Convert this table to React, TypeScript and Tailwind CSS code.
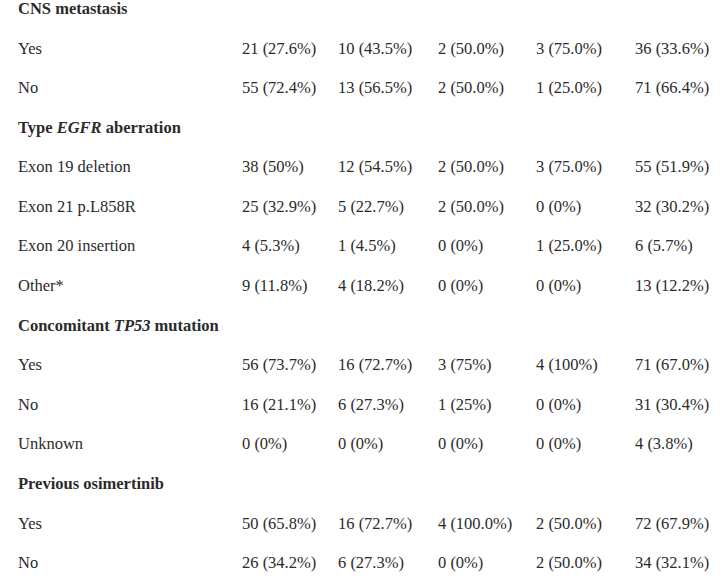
import React from "react";

type Row =
  | { kind: "head"; label: React.ReactNode }
  | { kind: "data"; label: string; values: string[] };

const rows: Row[] = [
  { kind: "head", label: "CNS metastasis" },
  { kind: "data", label: "Yes", values: ["21 (27.6%)", "10 (43.5%)", "2 (50.0%)", "3 (75.0%)", "36 (33.6%)"] },
  { kind: "data", label: "No", values: ["55 (72.4%)", "13 (56.5%)", "2 (50.0%)", "1 (25.0%)", "71 (66.4%)"] },
  { kind: "head", label: <>Type <i>EGFR</i> aberration</> },
  { kind: "data", label: "Exon 19 deletion", values: ["38 (50%)", "12 (54.5%)", "2 (50.0%)", "3 (75.0%)", "55 (51.9%)"] },
  { kind: "data", label: "Exon 21 p.L858R", values: ["25 (32.9%)", "5 (22.7%)", "2 (50.0%)", "0 (0%)", "32 (30.2%)"] },
  { kind: "data", label: "Exon 20 insertion", values: ["4 (5.3%)", "1 (4.5%)", "0 (0%)", "1 (25.0%)", "6 (5.7%)"] },
  { kind: "data", label: "Other*", values: ["9 (11.8%)", "4 (18.2%)", "0 (0%)", "0 (0%)", "13 (12.2%)"] },
  { kind: "head", label: <>Concomitant <i>TP53</i> mutation</> },
  { kind: "data", label: "Yes", values: ["56 (73.7%)", "16 (72.7%)", "3 (75%)", "4 (100%)", "71 (67.0%)"] },
  { kind: "data", label: "No", values: ["16 (21.1%)", "6 (27.3%)", "1 (25%)", "0 (0%)", "31 (30.4%)"] },
  { kind: "data", label: "Unknown", values: ["0 (0%)", "0 (0%)", "0 (0%)", "0 (0%)", "4 (3.8%)"] },
  { kind: "head", label: "Previous osimertinib" },
  { kind: "data", label: "Yes", values: ["50 (65.8%)", "16 (72.7%)", "4 (100.0%)", "2 (50.0%)", "72 (67.9%)"] },
  { kind: "data", label: "No", values: ["26 (34.2%)", "6 (27.3%)", "0 (0%)", "2 (50.0%)", "34 (32.1%)"] },
];

export default function App() {
  return (
    <div className="w-[720px] h-[582px] overflow-hidden bg-white text-[#2b2b2b] text-[16.5px] font-['Liberation_Serif',serif]">
      <div className="-mt-[10.5px]">
        {rows.map((row, i) => (
          <div key={i} className="h-[39.6px] flex items-center pl-[18px]">
            {row.kind === "head" ? (
              <span className="font-bold">{row.label}</span>
            ) : (
              <div className="grid grid-cols-[224px_96px_100px_98px_99px_1fr] w-full">
                <span>{row.label}</span>
                {row.values.map((v, j) => (
                  <span key={j}>{v}</span>
                ))}
              </div>
            )}
          </div>
        ))}
      </div>
    </div>
  );
}
